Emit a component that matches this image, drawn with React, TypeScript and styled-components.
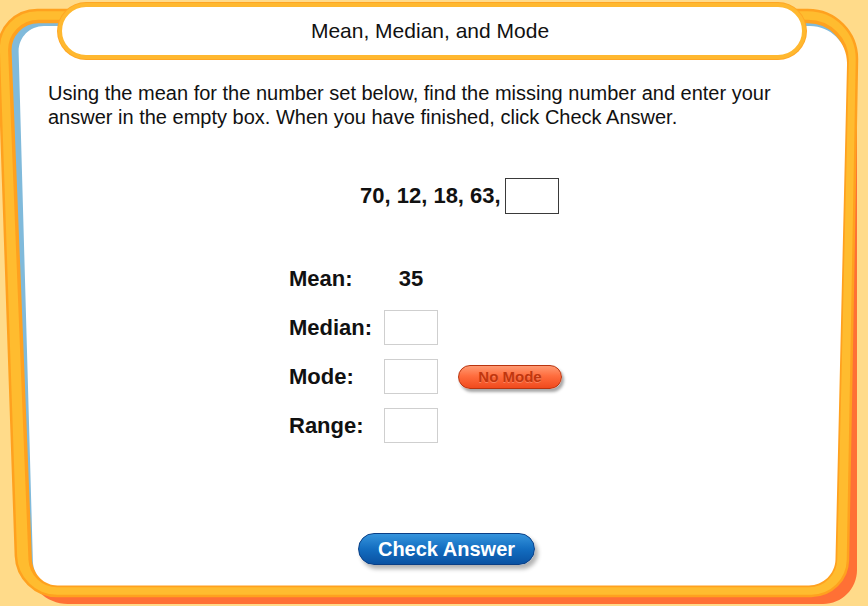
import React from "react";
import styled, { createGlobalStyle } from "styled-components";

const GlobalStyle = createGlobalStyle`
  html, body {
    margin: 0;
    padding: 0;
    background: #ffdb8a;
  }
  * { box-sizing: border-box; }
`;

type Pt = [number, number];

function roundedPath(pts: Pt[], radii: number[]): string {
  const n = pts.length;
  const k = 0.5523;
  let d = "";
  for (let i = 0; i < n; i++) {
    const p = pts[i];
    const prev = pts[(i - 1 + n) % n];
    const next = pts[(i + 1) % n];
    const r = radii[i];
    const l1 = Math.hypot(prev[0] - p[0], prev[1] - p[1]);
    const l2 = Math.hypot(next[0] - p[0], next[1] - p[1]);
    const a: Pt = [p[0] + ((prev[0] - p[0]) / l1) * r, p[1] + ((prev[1] - p[1]) / l1) * r];
    const b: Pt = [p[0] + ((next[0] - p[0]) / l2) * r, p[1] + ((next[1] - p[1]) / l2) * r];
    const c1: Pt = [a[0] + (p[0] - a[0]) * k, a[1] + (p[1] - a[1]) * k];
    const c2: Pt = [b[0] + (p[0] - b[0]) * k, b[1] + (p[1] - b[1]) * k];
    const f = (q: Pt) => `${q[0].toFixed(2)} ${q[1].toFixed(2)}`;
    d += `${i === 0 ? "M" : "L"}${f(a)} C${f(c1)} ${f(c2)} ${f(b)} `;
  }
  return d + "Z";
}

const outerL = (y: number) => 6.5 + 0.034 * (y - 280);
const outerR = (y: number) => 853 - 0.018 * (y - 280);
const innerL = (y: number) => 19 + 0.04 * (y - 280);
const innerR = (y: number) => 842 - 0.0233 * (y - 280);
const whiteL = (y: number) => 25 + 0.028 * (y - 280);

const redD = roundedPath(
  [
    [8, 10],
    [857, 10],
    [857, 604],
    [28, 604],
  ],
  [40, 50, 34, 40]
);
const bandD = roundedPath(
  [
    [outerL(10), 10],
    [outerR(10), 10],
    [outerR(596), 596],
    [outerL(596), 596],
  ],
  [40, 50, 36, 40]
);
const innerD = roundedPath(
  [
    [innerL(21.5), 21.5],
    [innerR(21.5), 21.5],
    [innerR(585.5), 585.5],
    [innerL(585.5), 585.5],
  ],
  [30, 40, 26, 26]
);
const whiteD = roundedPath(
  [
    [whiteL(26), 26],
    [innerR(26), 26],
    [innerR(585.5), 585.5],
    [whiteL(585.5), 585.5],
  ],
  [26, 38, 26, 24]
);

const Stage = styled.div`
  position: relative;
  width: 868px;
  height: 606px;
  overflow: hidden;
  padding-top: 3px;
  font-family: "Liberation Sans", Arial, sans-serif;
  color: #000;
`;

const FrameArt = styled.svg`
  position: absolute;
  left: 0;
  top: 0;
  z-index: 0;
`;

const Content = styled.div`
  position: relative;
  z-index: 1;
  display: flex;
  flex-direction: column;
  align-items: flex-start;
`;

const TitlePill = styled.header`
  margin-left: 58px;
  width: 748px;
  height: 56px;
  border: 4px solid #ffb82f;
  box-shadow: 0 0 0 1px #ffa624;
  border-radius: 28px;
  background: #fff;
  display: flex;
  align-items: center;
  justify-content: center;
  padding-right: 4px;
  font-size: 21px;
  color: #111;
`;

const Instructions = styled.p`
  margin: 22px 0 0 48px;
  width: 760px;
  font-size: 20px;
  line-height: 24px;
  color: #111;
`;

const NumberRow = styled.div`
  margin-top: 49px;
  margin-left: 360px;
  display: flex;
  align-items: center;
  gap: 4px;
`;

const BoldText = styled.span`
  font-size: 22px;
  font-weight: bold;
  color: #111;
`;

const AnswerBox = styled.input<{ $dark?: boolean; $h: number }>`
  width: 54px;
  height: ${(p) => p.$h}px;
  margin: 0;
  padding: 0;
  border: 1px solid ${(p) => (p.$dark ? "#3a3a3a" : "#cfcfcf")};
  background: #fff;
  outline: none;
  font: inherit;
`;

const StatsGrid = styled.div`
  margin-top: 47px;
  margin-left: 289px;
  display: grid;
  grid-template-columns: 75px 54px auto;
  grid-auto-rows: 35px;
  column-gap: 20px;
  row-gap: 14px;
  align-items: center;
`;

const StatValue = styled(BoldText)`
  text-align: center;
`;

const NoModeButton = styled.button`
  width: 104px;
  height: 24px;
  padding: 0;
  border: 1px solid #b8340f;
  border-radius: 12px;
  background: linear-gradient(to bottom, #ff9a72 0%, #ff6d3e 45%, #f04a1d 100%);
  box-shadow: 2px 3px 3px rgba(0, 0, 0, 0.35);
  color: #c0360e;
  font-family: "Liberation Sans", Arial, sans-serif;
  font-weight: bold;
  font-size: 15px;
  text-shadow: 0 1px 0 rgba(255, 170, 140, 0.5);
  cursor: pointer;
`;

const CheckButton = styled.button`
  margin-top: 90px;
  margin-left: 358px;
  width: 177px;
  height: 32px;
  padding: 0;
  border: 1px solid #0a3f86;
  border-radius: 16px;
  background: linear-gradient(to bottom, #3594dc 0%, #136dc0 50%, #0a52a2 100%);
  box-shadow: 3px 4px 4px rgba(0, 0, 0, 0.3);
  color: #fff;
  font-family: "Liberation Sans", Arial, sans-serif;
  font-weight: bold;
  font-size: 20px;
  cursor: pointer;
`;

export default function App() {
  return (
    <>
      <GlobalStyle />
      <Stage>
        <FrameArt width={868} height={606} viewBox="0 0 868 606" aria-hidden="true">
          <path d={redD} fill="#ff7035" />
          <path d={bandD} fill="#ffbc2f" stroke="#ffa11f" strokeWidth={2.5} />
          <path d={innerD} fill="#80badb" stroke="#ffa11f" strokeWidth={3.5} />
          <path d={whiteD} fill="#ffffff" />
        </FrameArt>
        <Content>
          <TitlePill>Mean, Median, and Mode</TitlePill>
          <Instructions>
            Using the mean for the number set below, find the missing number and enter your answer in
            the empty box. When you have finished, click Check Answer.
          </Instructions>
          <NumberRow>
            <BoldText>70, 12, 18, 63,</BoldText>
            <AnswerBox $dark $h={36} aria-label="missing number" />
          </NumberRow>
          <StatsGrid>
            <BoldText>Mean:</BoldText>
            <StatValue>35</StatValue>
            <span />
            <BoldText>Median:</BoldText>
            <AnswerBox $h={35} aria-label="median" />
            <span />
            <BoldText>Mode:</BoldText>
            <AnswerBox $h={35} aria-label="mode" />
            <NoModeButton>No Mode</NoModeButton>
            <BoldText>Range:</BoldText>
            <AnswerBox $h={35} aria-label="range" />
            <span />
          </StatsGrid>
          <CheckButton>Check Answer</CheckButton>
        </Content>
      </Stage>
    </>
  );
}
